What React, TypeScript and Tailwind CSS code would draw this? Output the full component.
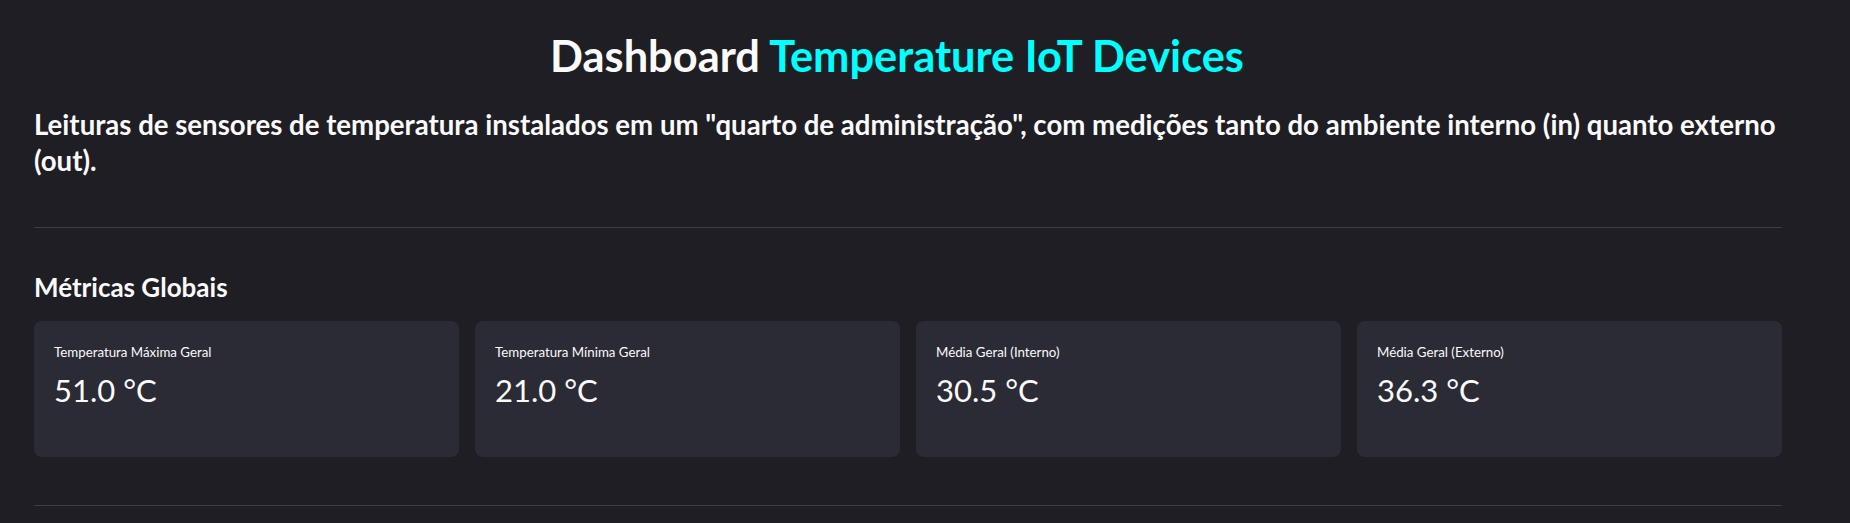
import React from 'react';

const metrics = [
  { label: 'Temperatura Máxima Geral', value: '51.0 °C' },
  { label: 'Temperatura Mínima Geral', value: '21.0 °C' },
  { label: 'Média Geral (Interno)', value: '30.5 °C' },
  { label: 'Média Geral (Externo)', value: '36.3 °C' },
];

const MetricCard = ({ label, value }: { label: string; value: string }) => (
  <div className="h-[136px] rounded-lg bg-[#2b2b35] px-5 pt-[21px]">
    <div className="text-[13.3px] leading-[20px] text-[#fafafa]">{label}</div>
    <div className="mt-[8px] text-[31px] leading-[40px] text-[#fafafa]">{value}</div>
  </div>
);

export default function App() {
  return (
    <div className="min-h-screen w-full bg-[#1f1e24] font-['Lato','Noto_Sans',sans-serif] text-[#fafafa]">
      <div className="w-[1782px] pl-[34px]">
        <h1 className="pt-[29px] pr-[22px] text-center text-[43.4px] font-bold leading-[52px]">
          Dashboard <span className="text-[#00ffff]">Temperature IoT Devices</span>
        </h1>

        <p className="mt-[26px] text-[27.6px] font-bold leading-[36px]">
          Leituras de sensores de temperatura instalados em um "quarto de administração", com medições tanto do
          ambiente interno (in) quanto externo (out).
        </p>

        <hr className="mt-[48px] border-t border-[#3d3d45]" />

        <h3 className="mt-[43px] text-[26px] font-bold leading-[32px]">Métricas Globais</h3>

        <div className="mt-[18px] grid grid-cols-4 gap-4">
          {metrics.map((m) => (
            <MetricCard key={m.label} label={m.label} value={m.value} />
          ))}
        </div>

        <hr className="mt-[48px] border-t border-[#3d3d45]" />
      </div>
    </div>
  );
}
